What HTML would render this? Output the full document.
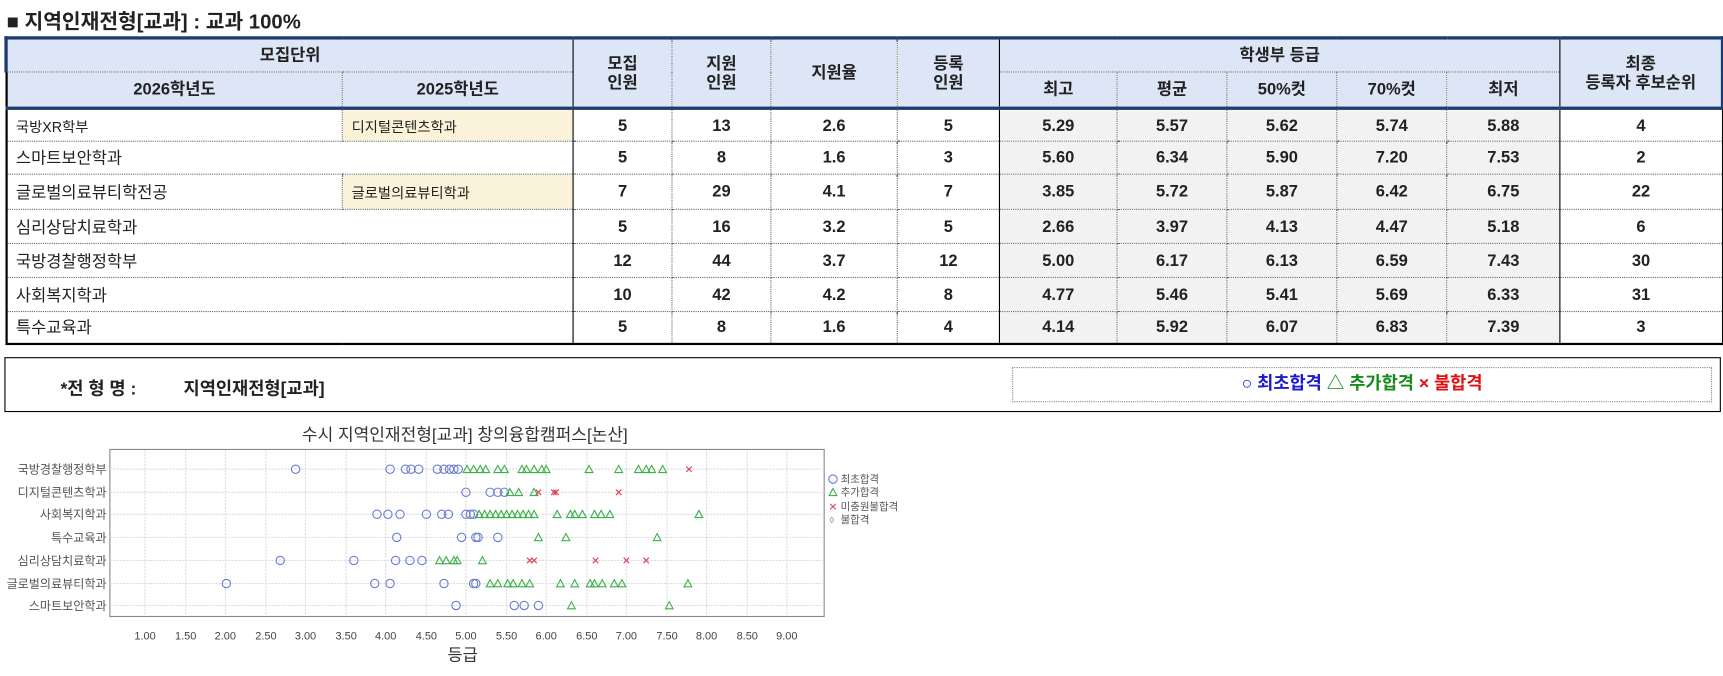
<!DOCTYPE html>
<html><head><meta charset="utf-8"><style>
*{margin:0;padding:0;box-sizing:border-box}
body{width:1723px;height:673px;background:#fff;font-family:"Liberation Sans","Noto Sans CJK KR",sans-serif;color:#222;position:relative;overflow:hidden}
#w{position:absolute;left:0;top:0;width:1568px;height:612px;transform:scale(1.0989);transform-origin:0 0}
.t{position:absolute;left:6px;top:6px;font-size:18.5px;font-weight:bold;color:#222}
table{position:absolute;left:4px;top:33px;border-collapse:collapse;table-layout:fixed;width:1562px;font-size:15px;border:2px solid #000}
td{text-align:center;border:1px dotted #666;font-weight:bold;padding:0;overflow:hidden;white-space:nowrap}
thead td{background:#dce6f7;font-weight:bold;color:#222;line-height:17px}
thead tr:first-child td{border-top:3px solid #1f3a6e}
thead tr:last-child td,thead td.rs{border-bottom:3px solid #1f3a6e}
thead tr:first-child td:first-child{border-left:3px solid #1f3a6e}
thead tr:first-child td:last-child{border-right:3px solid #1f3a6e}
.sr{border-right:1.5px solid #000}
tbody td.l{text-align:left;padding-left:8px;font-weight:normal;font-size:15px}
tbody td.sm{font-size:13px}
tbody td.y{background:#fbf3d9;text-align:left;padding-left:8px;font-weight:normal;font-size:13px}
tbody td.g{background:#f2f2f2}
.box{position:absolute;left:4px;top:325px;width:1562px;height:50px;border:1px solid #000}
.box .a{position:absolute;left:50px;top:14px;font-size:16px;font-weight:bold}
.box .b{position:absolute;left:162px;top:14px;font-size:16px;font-weight:bold}
.leg{position:absolute;left:916px;top:8px;width:637px;height:32px;border:1px dotted #888;text-align:center;font-size:16px;font-weight:bold;line-height:30px}
</style></head><body><div id="w">
<div class="t">■ 지역인재전형[교과] : 교과 100%</div>
<table>
<colgroup><col style="width:306px"><col style="width:210px"><col style="width:90px"><col style="width:90px"><col style="width:115px"><col style="width:93px"><col style="width:107px"><col style="width:100px"><col style="width:100px"><col style="width:100px"><col style="width:103px"><col style="width:148px"></colgroup>
<thead>
<tr style="height:31px"><td colspan="2" class="sr">모집단위</td><td rowspan="2" class="rs">모집<br>인원</td><td rowspan="2" class="rs">지원<br>인원</td><td rowspan="2" class="rs">지원율</td><td rowspan="2" class="rs sr">등록<br>인원</td><td colspan="5" class="sr">학생부 등급</td><td rowspan="2" class="rs">최종<br>등록자 후보순위</td></tr>
<tr style="height:33px"><td>2026학년도</td><td class="sr">2025학년도</td><td>최고</td><td>평균</td><td>50%컷</td><td>70%컷</td><td class="sr">최저</td></tr>
</thead>
<tbody>
<tr style="height:30px"><td class="l sm">국방XR학부</td><td class="y sr">디지털콘텐츠학과</td><td>5</td><td>13</td><td>2.6</td><td class="sr">5</td><td class="g">5.29</td><td class="g">5.57</td><td class="g">5.62</td><td class="g">5.74</td><td class="g sr">5.88</td><td>4</td></tr>
<tr style="height:30px"><td class="l" colspan="2" style="border-right:1.5px solid #000">스마트보안학과</td><td>5</td><td>8</td><td>1.6</td><td class="sr">3</td><td class="g">5.60</td><td class="g">6.34</td><td class="g">5.90</td><td class="g">7.20</td><td class="g sr">7.53</td><td>2</td></tr>
<tr style="height:32px"><td class="l">글로벌의료뷰티학전공</td><td class="y sr">글로벌의료뷰티학과</td><td>7</td><td>29</td><td>4.1</td><td class="sr">7</td><td class="g">3.85</td><td class="g">5.72</td><td class="g">5.87</td><td class="g">6.42</td><td class="g sr">6.75</td><td>22</td></tr>
<tr style="height:31px"><td class="l" colspan="2" style="border-right:1.5px solid #000">심리상담치료학과</td><td>5</td><td>16</td><td>3.2</td><td class="sr">5</td><td class="g">2.66</td><td class="g">3.97</td><td class="g">4.13</td><td class="g">4.47</td><td class="g sr">5.18</td><td>6</td></tr>
<tr style="height:31px"><td class="l" colspan="2" style="border-right:1.5px solid #000">국방경찰행정학부</td><td>12</td><td>44</td><td>3.7</td><td class="sr">12</td><td class="g">5.00</td><td class="g">6.17</td><td class="g">6.13</td><td class="g">6.59</td><td class="g sr">7.43</td><td>30</td></tr>
<tr style="height:31px"><td class="l" colspan="2" style="border-right:1.5px solid #000">사회복지학과</td><td>10</td><td>42</td><td>4.2</td><td class="sr">8</td><td class="g">4.77</td><td class="g">5.46</td><td class="g">5.41</td><td class="g">5.69</td><td class="g sr">6.33</td><td>31</td></tr>
<tr style="height:29px"><td class="l" colspan="2" style="border-right:1.5px solid #000">특수교육과</td><td>5</td><td>8</td><td>1.6</td><td class="sr">4</td><td class="g">4.14</td><td class="g">5.92</td><td class="g">6.07</td><td class="g">6.83</td><td class="g sr">7.39</td><td>3</td></tr>
</tbody></table>
<div class="box"><div class="a">*전 형 명 :</div><div class="b">지역인재전형[교과]</div>
<div class="leg"><span style="color:#1a1ad0">○ 최초합격</span> <span style="color:#1a8a1a">△ 추가합격</span> <span style="color:#e01010">× 불합격</span></div></div>

<svg style="position:absolute;left:0;top:380px" width="840" height="235" viewBox="0 380 840 235" font-family="Liberation Sans,Noto Sans CJK KR,sans-serif">
<defs>
<circle id="c" r="3.8" fill="none" stroke="#6c7bd0" stroke-width="1"/>
<polygon id="t" points="0,-3.5 3.5,3 -3.5,3" fill="none" stroke="#3cb04a" stroke-width="1"/>
<path id="x" d="M-2.5,-2.5L2.5,2.5M-2.5,2.5L2.5,-2.5" stroke="#e04050" stroke-width="1"/>
</defs>
<text x="423" y="401" font-size="15.5" text-anchor="middle" fill="#333">수시 지역인재전형[교과] 창의융합캠퍼스[논산]</text>
<rect x="100" y="409" width="650" height="152" fill="#fff" stroke="#888"/>
<g stroke="#ddd" stroke-dasharray="2,1">
<line x1="132" y1="410" x2="132" y2="560"/><line x1="169" y1="410" x2="169" y2="560"/><line x1="205" y1="410" x2="205" y2="560"/><line x1="242" y1="410" x2="242" y2="560"/><line x1="278" y1="410" x2="278" y2="560"/><line x1="315" y1="410" x2="315" y2="560"/><line x1="351" y1="410" x2="351" y2="560"/><line x1="388" y1="410" x2="388" y2="560"/><line x1="424" y1="410" x2="424" y2="560"/><line x1="461" y1="410" x2="461" y2="560"/><line x1="497" y1="410" x2="497" y2="560"/><line x1="534" y1="410" x2="534" y2="560"/><line x1="570" y1="410" x2="570" y2="560"/><line x1="607" y1="410" x2="607" y2="560"/><line x1="643" y1="410" x2="643" y2="560"/><line x1="680" y1="410" x2="680" y2="560"/><line x1="716" y1="410" x2="716" y2="560"/>
<line x1="100" y1="427" x2="750" y2="427"/><line x1="100" y1="448" x2="750" y2="448"/><line x1="100" y1="468" x2="750" y2="468"/><line x1="100" y1="489" x2="750" y2="489"/><line x1="100" y1="510" x2="750" y2="510"/><line x1="100" y1="531" x2="750" y2="531"/><line x1="100" y1="551" x2="750" y2="551"/>
</g>
<g font-size="11" fill="#555" text-anchor="end">
<text x="97" y="431">국방경찰행정학부</text><text x="97" y="452">디지털콘텐츠학과</text><text x="97" y="472">사회복지학과</text><text x="97" y="493">특수교육과</text><text x="97" y="514">심리상담치료학과</text><text x="97" y="535">글로벌의료뷰티학과</text><text x="97" y="555">스마트보안학과</text>
</g>
<g font-size="10" fill="#444" text-anchor="middle">
<text x="132" y="582">1.00</text><text x="169" y="582">1.50</text><text x="205" y="582">2.00</text><text x="242" y="582">2.50</text><text x="278" y="582">3.00</text><text x="315" y="582">3.50</text><text x="351" y="582">4.00</text><text x="388" y="582">4.50</text><text x="424" y="582">5.00</text><text x="461" y="582">5.50</text><text x="497" y="582">6.00</text><text x="534" y="582">6.50</text><text x="570" y="582">7.00</text><text x="607" y="582">7.50</text><text x="643" y="582">8.00</text><text x="680" y="582">8.50</text><text x="716" y="582">9.00</text>
</g>
<text x="421" y="601" font-size="15" text-anchor="middle" fill="#333">등급</text>
<g transform="translate(0,427)">
<use href="#c" x="269"/><use href="#c" x="355"/><use href="#c" x="369"/><use href="#c" x="374"/><use href="#c" x="381"/><use href="#c" x="398"/><use href="#c" x="404"/><use href="#c" x="409"/><use href="#c" x="413"/><use href="#c" x="417"/>
<use href="#t" x="425"/><use href="#t" x="431"/><use href="#t" x="437"/><use href="#t" x="442"/><use href="#t" x="453"/><use href="#t" x="459"/><use href="#t" x="475"/><use href="#t" x="479"/><use href="#t" x="486"/><use href="#t" x="493"/><use href="#t" x="497"/><use href="#t" x="536"/><use href="#t" x="563"/><use href="#t" x="581"/><use href="#t" x="588"/><use href="#t" x="593"/><use href="#t" x="603"/><use href="#x" x="627"/>
</g>
<g transform="translate(0,448)">
<use href="#c" x="424"/><use href="#c" x="446"/><use href="#c" x="453"/><use href="#c" x="459"/>
<use href="#t" x="464"/><use href="#t" x="472"/><use href="#t" x="486"/><use href="#x" x="490"/><use href="#x" x="504"/><use href="#x" x="506"/><use href="#x" x="563"/>
</g>
<g transform="translate(0,468)">
<use href="#c" x="343"/><use href="#c" x="353"/><use href="#c" x="364"/><use href="#c" x="388"/><use href="#c" x="402"/><use href="#c" x="408"/><use href="#c" x="424"/><use href="#c" x="428"/><use href="#c" x="431"/>
<use href="#t" x="436"/><use href="#t" x="441"/><use href="#t" x="446"/><use href="#t" x="451"/><use href="#t" x="456"/><use href="#t" x="461"/><use href="#t" x="466"/><use href="#t" x="471"/><use href="#t" x="476"/><use href="#t" x="481"/><use href="#t" x="486"/><use href="#t" x="507"/><use href="#t" x="519"/><use href="#t" x="523"/><use href="#t" x="530"/><use href="#t" x="541"/><use href="#t" x="547"/><use href="#t" x="555"/><use href="#t" x="636"/>
</g>
<g transform="translate(0,489)">
<use href="#c" x="361"/><use href="#c" x="420"/><use href="#c" x="433"/><use href="#c" x="435"/><use href="#c" x="453"/>
<use href="#t" x="490"/><use href="#t" x="515"/><use href="#t" x="598"/>
</g>
<g transform="translate(0,510)">
<use href="#c" x="255"/><use href="#c" x="322"/><use href="#c" x="360"/><use href="#c" x="373"/><use href="#c" x="384"/>
<use href="#t" x="400"/><use href="#t" x="406"/><use href="#t" x="413"/><use href="#t" x="416"/><use href="#t" x="439"/><use href="#x" x="482"/><use href="#x" x="486"/><use href="#x" x="542"/><use href="#x" x="570"/><use href="#x" x="588"/>
</g>
<g transform="translate(0,531)">
<use href="#c" x="206"/><use href="#c" x="341"/><use href="#c" x="355"/><use href="#c" x="404"/><use href="#c" x="431"/><use href="#c" x="433"/>
<use href="#t" x="446"/><use href="#t" x="453"/><use href="#t" x="462"/><use href="#t" x="467"/><use href="#t" x="475"/><use href="#t" x="482"/><use href="#t" x="510"/><use href="#t" x="523"/><use href="#t" x="537"/><use href="#t" x="541"/><use href="#t" x="548"/><use href="#t" x="559"/><use href="#t" x="566"/><use href="#t" x="626"/>
</g>
<g transform="translate(0,551)">
<use href="#c" x="415"/><use href="#c" x="468"/><use href="#c" x="477"/><use href="#c" x="490"/>
<use href="#t" x="520"/><use href="#t" x="609"/>
</g>
<g font-size="9.5" fill="#555">
<use href="#c" x="758" y="436"/><text x="765" y="439">최초합격</text>
<use href="#t" x="758" y="448"/><text x="765" y="451">추가합격</text>
<use href="#x" x="758" y="461"/><text x="765" y="464">미충원불합격</text>
<text x="755" y="476" fill="#8a4aa0" font-size="8">◊</text><text x="765" y="476">불합격</text>
</g>
</svg>
</div></body></html>
